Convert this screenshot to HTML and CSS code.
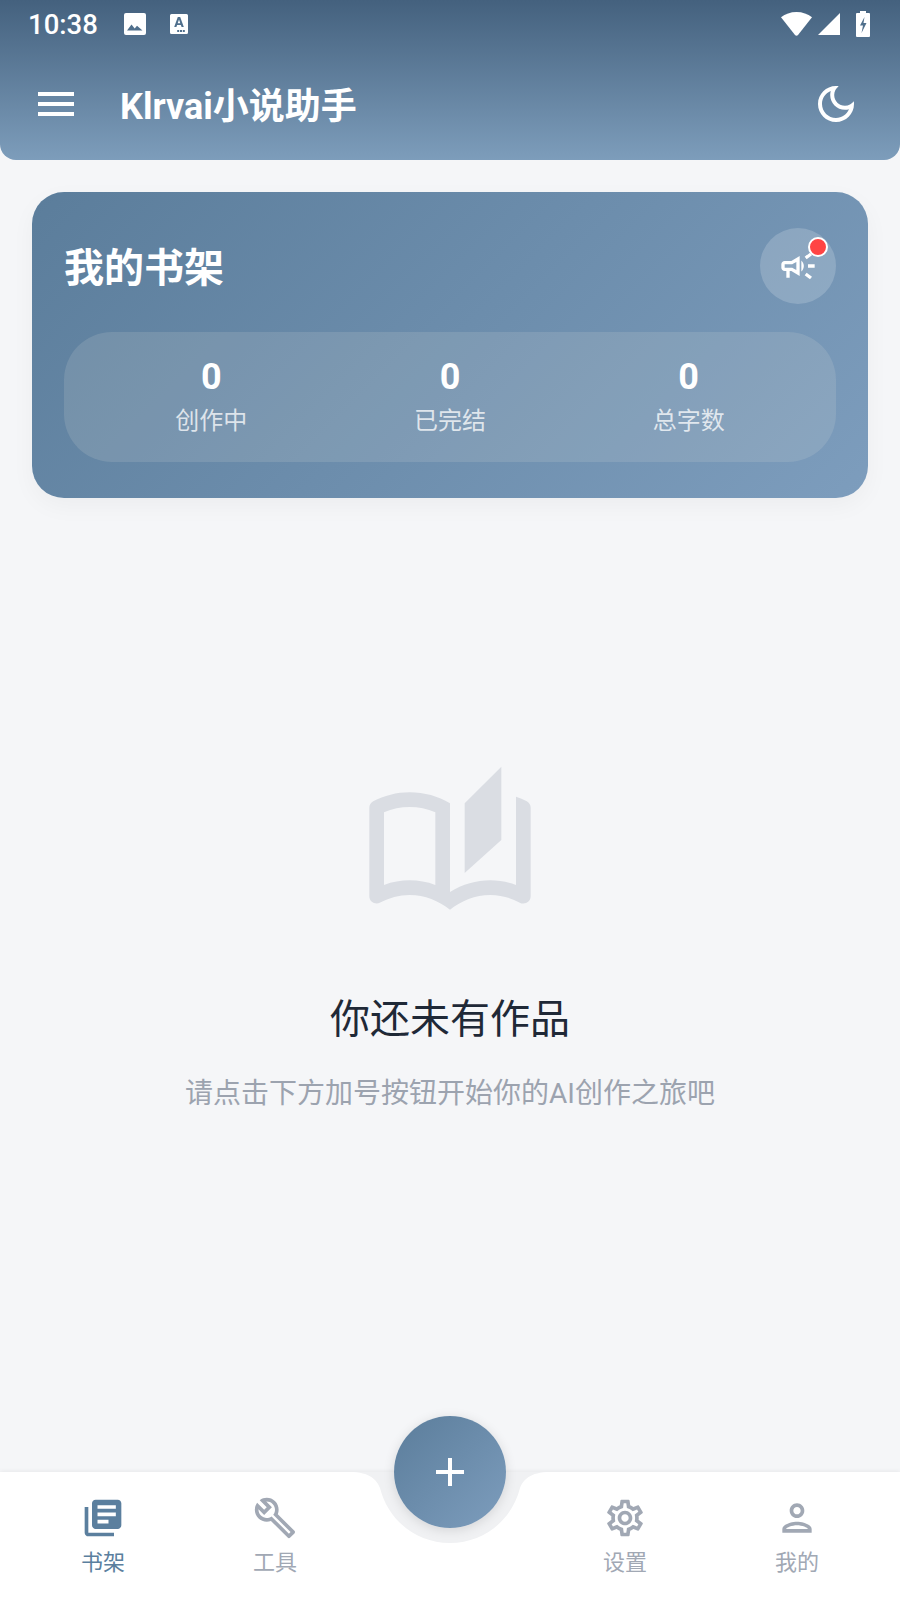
FILE: index.html
```html
<!DOCTYPE html>
<html lang="zh-CN">
<head>
    <meta charset="UTF-8">
    <meta name="viewport" content="width=device-width, initial-scale=1.0">
    <title>Klrvai小说助手</title>
    <link rel="stylesheet" href="styles.css">
</head>
<body>
<div class="app">
    <header class="app-header">
        <div class="status-bar">
            <span class="status-time">10:38</span>
            <svg class="status-image" viewBox="0 0 22 22"><path fill="#fff" d="M2 0h18a2 2 0 0 1 2 2v18a2 2 0 0 1-2 2H2a2 2 0 0 1-2-2V2a2 2 0 0 1 2-2z"/><path fill="#4f6f8c" d="M3 17.500l4.500-6 3.200 4 2.300-2.800 5.500 4.800z"/></svg>
            <svg class="status-font" viewBox="0 0 18 20"><path fill="#fff" d="M1.500 0h15A1.500 1.500 0 0 1 18 1.500v17a1.500 1.500 0 0 1-1.500 1.500h-15A1.500 1.500 0 0 1 0 18.500v-17A1.500 1.500 0 0 1 1.500 0z"/><path fill="#4f6f8c" d="M7.800 3h2.400l3.600 10h-2.200l-.7-2.100H7.100L6.400 13H4.200zM7.700 9.200h2.600L9 5.400zM10 16h2v2h-2zM12.800 16h2v2h-2zM7.200 16h2v2h-2z"/></svg>
            <span class="status-spacer"></span>
            <svg class="status-wifi" viewBox="0 0 31 24"><path fill="#fff" d="M15.500 0C9.500 0 4.300 2 0 5.300l14 17.800c.8 1 2.200 1 3 0L31 5.300C26.700 2 21.500 0 15.500 0z"/></svg>
            <svg class="status-signal" viewBox="0 0 22 22"><path fill="#fff" d="M22 0v22H0z"/></svg>
            <svg class="status-battery" viewBox="0 0 14 26"><path fill="#fff" d="M4 0h6v2h3a1 1 0 0 1 1 1v22a1 1 0 0 1-1 1H1a1 1 0 0 1-1-1V3a1 1 0 0 1 1-1h3z"/><path fill="#4f6f8c" d="M8.500 6L4 14.500h3L5.500 22 10.500 12H7.500z"/></svg>
        </div>
        <div class="toolbar">
            <svg class="menu-icon" viewBox="0 0 36 24"><path fill="#fff" d="M0 0h36v4H0zM0 10h36v4H0zM0 20h36v4H0z"/></svg>
            <h1 class="app-title">Klrvai小说助手</h1>
            <svg class="moon-icon" viewBox="0 0 24 24"><path fill="#fff" d="M9.370 5.510C9.190 6.150 9.100 6.820 9.100 7.500c0 4.080 3.320 7.400 7.400 7.400.68 0 1.350-.09 1.990-.27C17.450 17.190 14.930 19 12 19c-3.860 0-7-3.140-7-7 0-2.930 1.810-5.450 4.370-6.490zM12 3c-4.970 0-9 4.030-9 9s4.030 9 9 9 9-4.030 9-9c0-.46-.04-.92-.1-1.360-.98 1.370-2.580 2.260-4.400 2.260-2.980 0-5.400-2.420-5.400-5.400 0-1.810.89-3.420 2.260-4.400C12.920 3.040 12.460 3 12 3z"/></svg>
        </div>
    </header>

    <main class="content">
        <section class="shelf-card">
            <div class="shelf-top">
                <h2 class="shelf-title">我的书架</h2>
                <div class="notice-btn">
                    <svg class="notice-icon" viewBox="0 0 24 24"><path fill="#fff" d="M18 11v2h4v-2h-4zm-2 6.610c.96.71 2.210 1.650 3.200 2.390.4-.53.8-1.070 1.200-1.600-.99-.74-2.240-1.680-3.200-2.400-.4.54-.8 1.080-1.200 1.610zM20.400 5.600c-.4-.53-.8-1.070-1.200-1.600-.99.74-2.240 1.680-3.200 2.400.4.53.8 1.070 1.200 1.600.96-.72 2.210-1.650 3.200-2.400zM4 9c-1.100 0-2 .9-2 2v2c0 1.100.9 2 2 2h1v4h2v-4h1l5 3V6L8 9H4zm5.030 1.710L11 9.530v4.940l-1.970-1.180-.48-.29H4v-2h4.550l.48-.29zM15.500 12c0-1.330-.58-2.530-1.500-3.350v6.690c.92-.81 1.500-2.010 1.500-3.340z"/></svg>
                    <span class="notice-dot"></span>
                </div>
            </div>
            <div class="stats">
                <div class="stat"><div class="stat-value">0</div><div class="stat-label">创作中</div></div>
                <div class="stat"><div class="stat-value">0</div><div class="stat-label">已完结</div></div>
                <div class="stat"><div class="stat-value">0</div><div class="stat-label">总字数</div></div>
            </div>
        </section>

        <section class="empty">
            <svg class="empty-icon" viewBox="0 0 24 24"><path fill="#dadde3" d="M22.470 5.200C22 4.960 21.510 4.760 21 4.590v12.030C19.860 16.210 18.690 16 17.500 16c-1.900 0-3.780.54-5.500 1.580V5.480C10.380 4.550 8.510 4 6.500 4 4.710 4 3.020 4.470 1.530 5.200c-.33.17-.53.51-.53.88v12.080c0 .58.47.99 1 .99.16 0 .32-.04.48-.12C3.690 18.400 5.050 18 6.500 18c2.070 0 3.980.82 5.500 2 1.520-1.180 3.430-2 5.500-2 1.450 0 2.810.4 4.020 1.040.16.08.32.12.48.12.52 0 1-.41 1-.99V6.080c0-.37-.2-.71-.53-.88zM10 16.620C8.860 16.210 7.690 16 6.500 16c-1.190 0-2.360.21-3.500.62V6.710C4.110 6.250 5.280 6 6.500 6c1.200 0 2.390.25 3.500.72v9.900zM19 .5l-5 5V15l5-4.500V.5z"/></svg>
            <h3 class="empty-title">你还未有作品</h3>
            <p class="empty-text">请点击下方加号按钮开始你的AI创作之旅吧</p>
        </section>
    </main>

    <nav class="bottom-nav">
        <svg class="nav-notch" viewBox="0 0 200 72"><path fill="#f0f1f3" d="M0 0c20 0 27 8 30 16 8 32 36 55 70 55s62-23 70-55c3-8 10-16 30-16z"/></svg>
        <a class="nav-item active">
            <svg class="nav-icon" viewBox="0 0 24 24"><path fill="#5b7f9e" d="M4 6H2v14c0 1.100.9 2 2 2h14v-2H4V6zm16-4H8c-1.100 0-2 .9-2 2v12c0 1.100.9 2 2 2h12c1.100 0 2-.9 2-2V4c0-1.100-.9-2-2-2zm-1 9H9V9h10v2zm-4 4H9v-2h6v2zm4-8H9V5h10v2z"/></svg>
            <span>书架</span>
        </a>
        <a class="nav-item">
            <svg class="nav-icon" viewBox="0 0 24 24"><path fill="#a1a8b4" d="M22.610 18.990l-9.080-9.080c.93-2.340.45-5.100-1.440-7C9.790.61 6.210.4 3.660 2.260L7.500 6.110 6.080 7.520 2.250 3.690C.39 6.230.6 9.820 2.900 12.110c1.860 1.860 4.570 2.350 6.890 1.480l9.110 9.110c.39.39 1.020.39 1.410 0l2.300-2.300c.4-.38.4-1.010 0-1.410zm-3 1.600l-9.460-9.460c-.61.45-1.290.72-2 .82-1.360.2-2.790-.21-3.830-1.250C3.370 9.760 2.930 8.500 3 7.260l3.090 3.090 4.240-4.240-3.090-3.090c1.240-.07 2.490.37 3.440 1.310 1.080 1.080 1.490 2.570 1.240 3.960-.12.71-.42 1.370-.88 1.960l9.450 9.450-.88.88z"/></svg>
            <span>工具</span>
        </a>
        <div class="nav-gap">
            <button class="fab"><svg class="fab-icon" viewBox="0 0 28 28"><path fill="#fff" d="M12 0h4v12h12v4H16v12h-4V16H0v-4h12z"/></svg></button>
        </div>
        <a class="nav-item">
            <svg class="nav-icon" viewBox="0 0 24 24"><path fill="#a1a8b4" d="M19.430 12.980c.04-.32.07-.64.07-.98 0-.34-.03-.66-.07-.98l2.110-1.650c.19-.15.24-.42.12-.64l-2-3.460c-.09-.16-.26-.25-.44-.25-.06 0-.12.01-.17.03l-2.490 1c-.52-.4-1.080-.73-1.690-.98l-.38-2.650C14.460 2.180 14.250 2 14 2h-4c-.25 0-.46.18-.49.42l-.38 2.650c-.61.25-1.170.59-1.690.98l-2.490-1c-.06-.02-.12-.03-.18-.03-.17 0-.34.09-.43.25l-2 3.460c-.13.22-.07.49.12.64l2.110 1.650c-.04.32-.07.65-.07.98 0 .33.03.66.07.98l-2.110 1.650c-.19.15-.24.42-.12.64l2 3.460c.09.16.26.25.44.25.06 0 .12-.01.17-.03l2.490-1c.52.4 1.080.73 1.690.98l.38 2.650c.03.24.24.42.49.42h4c.25 0 .46-.18.49-.42l.38-2.650c.61-.25 1.170-.59 1.690-.98l2.490 1c.06.02.12.03.18.03.17 0 .34-.09.43-.25l2-3.460c.12-.22.07-.49-.12-.64l-2.110-1.650zm-1.980-1.710c.04.31.05.52.05.73 0 .21-.02.43-.05.73l-.14 1.130.89.7 1.080.84-.7 1.210-1.270-.51-1.040-.42-.9.68c-.43.32-.84.56-1.250.73l-1.060.43-.16 1.130-.2 1.350h-1.400l-.19-1.350-.16-1.130-1.060-.43c-.43-.18-.83-.41-1.230-.71l-.91-.7-1.060.43-1.270.51-.7-1.210 1.080-.84.89-.7-.14-1.130c-.03-.31-.05-.54-.05-.74s.02-.43.05-.73l.14-1.130-.89-.7-1.080-.84.7-1.210 1.270.51 1.040.42.9-.68c.43-.32.84-.56 1.250-.73l1.060-.43.16-1.130.2-1.350h1.390l.19 1.350.16 1.130 1.060.43c.43.18.83.41 1.230.71l.91.7 1.060-.43 1.270-.51.7 1.210-1.070.85-.89.7.14 1.130zM12 8c-2.210 0-4 1.790-4 4s1.790 4 4 4 4-1.790 4-4-1.790-4-4-4zm0 6c-1.100 0-2-.9-2-2s.9-2 2-2 2 .9 2 2-.9 2-2 2z"/></svg>
            <span>设置</span>
        </a>
        <a class="nav-item">
            <svg class="nav-icon" viewBox="0 0 24 24"><path fill="#a1a8b4" d="M12 6c1.100 0 2 .9 2 2s-.9 2-2 2-2-.9-2-2 .9-2 2-2m0 10c2.700 0 5.800 1.290 6 2H6c.23-.72 3.310-2 6-2m0-12C9.790 4 8 5.790 8 8s1.790 4 4 4 4-1.790 4-4-1.790-4-4-4zm0 10c-2.670 0-8 1.340-8 4v2h16v-2c0-2.660-5.330-4-8-4z"/></svg>
            <span>我的</span>
        </a>
    </nav>
</div>
</body>
</html>
```

FILE: styles.css
```css
html, body {
    margin: 0;
    padding: 0;
    height: 100%;
    font-family: Roboto, "Noto Sans CJK SC", sans-serif;
    background-color: #f5f6f8;
}

h1, h2, h3, p {
    margin: 0;
}

.app {
    display: flex;
    flex-direction: column;
    height: 1600px;
    overflow: hidden;
}

.app-header {
    height: 160px;
    flex: none;
    background: linear-gradient(180deg, #44617e 0%, #7d9dbb 100%);
    border-radius: 0 0 16px 16px;
}

.status-bar {
    display: flex;
    align-items: center;
    height: 48px;
    padding: 0 30px 0 28px;
    color: #fff;
}

.status-time {
    font-size: 27.5px;
    font-weight: 500;
    width: 96px;
}

.status-image { width: 22px; height: 22px; }
.status-font { width: 18px; height: 20px; margin-left: 24px; }
.status-spacer { flex: 1; }
.status-wifi { width: 31px; height: 24px; }
.status-signal { width: 22px; height: 22px; margin-left: 6px; }
.status-battery { width: 14px; height: 26px; margin-left: 16px; }

.toolbar {
    display: flex;
    align-items: center;
    height: 112px;
    padding: 0 40px 0 38px;
}

.menu-icon {
    width: 36px;
    height: 24px;
}

.app-title {
    flex: 1;
    margin-left: 46px;
    margin-bottom: 2px;
    font-size: 36px;
    font-weight: 700;
    color: #fff;
}

.moon-icon {
    width: 48px;
    height: 48px;
}

.content {
    flex: 1;
    padding: 32px;
}

.shelf-card {
    height: 306px;
    box-sizing: border-box;
    padding: 36px 32px;
    border-radius: 32px;
    background: linear-gradient(135deg, #5b7d9b 0%, #7d9dbd 100%);
    box-shadow: 0 8px 24px rgba(0, 0, 0, 0.04);
}

.shelf-top {
    display: flex;
    align-items: center;
    justify-content: space-between;
    height: 76px;
    margin-bottom: 28px;
}

.shelf-title {
    margin-bottom: 2px;
    font-size: 40px;
    font-weight: 700;
    color: #fff;
}

.notice-btn {
    position: relative;
    display: flex;
    align-items: center;
    justify-content: center;
    width: 76px;
    height: 76px;
    border-radius: 50%;
    background-color: rgba(255, 255, 255, 0.18);
}

.notice-icon {
    width: 40px;
    height: 40px;
}

.notice-dot {
    position: absolute;
    top: 9px;
    right: 8px;
    width: 16px;
    height: 16px;
    border: 2px solid #fff;
    border-radius: 50%;
    background-color: #ff4444;
}

.stats {
    display: grid;
    grid-template-columns: repeat(3, 1fr);
    align-items: center;
    height: 130px;
    padding: 0 28px;
    border-radius: 48px;
    background-color: rgba(225, 225, 220, 0.15);
    color: #fff;
    text-align: center;
}

.stat-value {
    font-size: 36px;
    font-weight: 700;
    line-height: 44px;
    margin-bottom: 4px;
}

.stat-label {
    font-size: 24px;
    line-height: 36px;
    color: rgba(255, 255, 255, 0.75);
}

.empty {
    display: flex;
    flex-direction: column;
    align-items: center;
    padding-top: 265px;
}

.empty-icon {
    width: 176px;
    height: 176px;
}

.empty-title {
    margin-top: 53px;
    font-size: 40px;
    font-weight: 400;
    line-height: 56px;
    color: #1f2937;
}

.empty-text {
    margin-top: 26px;
    font-size: 28px;
    line-height: 40px;
    color: #9ca3af;
}

.bottom-nav {
    position: relative;
    flex: none;
    display: grid;
    grid-template-columns: 1fr 1fr 178px 1fr 1fr;
    height: 128px;
    box-sizing: border-box;
    padding: 0 17px;
    background-color: #fff;
    box-shadow: 0 -1px 4px rgba(0, 0, 0, 0.06);
}

.nav-notch {
    position: absolute;
    left: 350px;
    top: 0;
    width: 200px;
    height: 72px;
}

.nav-item {
    position: relative;
    display: flex;
    flex-direction: column;
    align-items: center;
    padding-top: 24px;
    font-size: 22px;
    line-height: 28px;
    color: #a1a8b4;
}

.nav-item.active {
    color: #5b7f9e;
}

.nav-icon {
    width: 44px;
    height: 44px;
    margin-bottom: 9px;
}

.nav-gap {
    position: relative;
}

.fab {
    position: absolute;
    left: 33px;
    top: -56px;
    display: flex;
    align-items: center;
    justify-content: center;
    width: 112px;
    height: 112px;
    padding: 0;
    border: none;
    border-radius: 50%;
    background: linear-gradient(135deg, #5b7d9b 0%, #7d9dbd 100%);
    box-shadow: 0 2px 12px rgba(0, 0, 0, 0.12);
}

.fab-icon {
    width: 28px;
    height: 28px;
}
```
